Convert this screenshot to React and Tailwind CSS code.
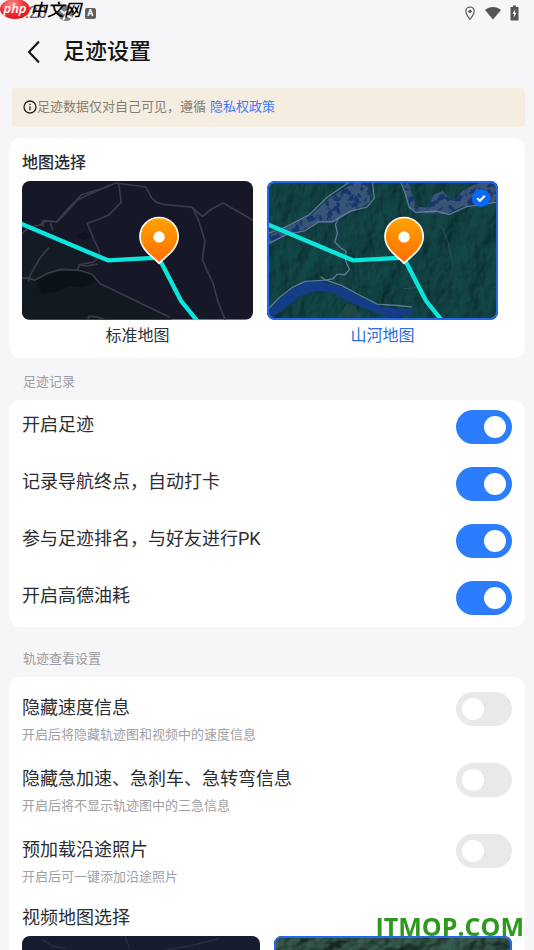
import { useState } from "react";

const recordItems = [
  "开启足迹",
  "记录导航终点，自动打卡",
  "参与足迹排名，与好友进行PK",
  "开启高德油耗",
];

const trackItems = [
  { title: "隐藏速度信息", hint: "开启后将隐藏轨迹图和视频中的速度信息" },
  { title: "隐藏急加速、急刹车、急转弯信息", hint: "开启后将不显示轨迹图中的三急信息" },
  { title: "预加载沿途照片", hint: "开启后可一键添加沿途照片" },
];

function StatusBar() {
  return (
    <div className="relative flex h-[26px] shrink-0 items-center justify-between pr-[15px] pl-4 text-[#5c5c5c]">
      <div className="flex items-center gap-2.5">
        <span className="font-[Roboto] text-base leading-5">4:20</span>
        <svg viewBox="0 0 18 18" className="size-[18px]" aria-hidden="true">
          <circle cx="9" cy="9" r="8" fill="#77797b" />
          <path d="M2 5l5 4 9-5M6 16l3-5 6 3" fill="none" stroke="#f7f7f8" strokeWidth="2" />
        </svg>
        <span className="flex size-[11px] items-center justify-center rounded-[2px] bg-[#606060] font-[Roboto] text-[9px] leading-none font-bold text-white">
          A
        </span>
      </div>
      <div className="flex items-center gap-2">
        <svg viewBox="0 0 12 16" className="h-[15px] w-3" aria-hidden="true">
          <path d="M6 1.200c-2.600 0-4.400 1.900-4.400 4.400C1.600 8.800 6 14.200 6 14.200s4.400-5.400 4.400-8.600C10.400 3.100 8.600 1.200 6 1.200z" fill="none" stroke="#666" strokeWidth="1.400" />
          <circle cx="6" cy="5.700" r="1.800" fill="#555" />
        </svg>
        <svg viewBox="0 0 18 14" className="h-[14px] w-[18px]" aria-hidden="true">
          <path d="M1 4C5.500 0 12.500 0 17 4L9 13.500z" fill="#555" />
        </svg>
        <svg viewBox="0 0 9 16" className="h-4 w-[9px]" aria-hidden="true">
          <path d="M3 0.500h3v1.500h2.500v13.500h-8V2H3z" fill="#555" />
          <path d="M5.300 4L2.500 9h1.700l-.6 4 2.900-5.300H4.800z" fill="#f7f7f8" />
        </svg>
      </div>
      <div className="absolute top-0 left-0 flex items-start text-black">
        <svg viewBox="0 0 30 20" className="h-5 w-[30px]" aria-hidden="true">
          <defs>
            <radialGradient id="oval" cx="0.400" cy="0.250" r="0.800">
              <stop offset="0" stopColor="#ff8d86" />
              <stop offset="0.500" stopColor="#f3353a" />
              <stop offset="1" stopColor="#d9121d" />
            </radialGradient>
          </defs>
          <ellipse cx="15" cy="9" rx="15" ry="10" fill="url(#oval)" />
          <text x="15" y="13" textAnchor="middle" fill="#fff" fontFamily="Open Sans" fontSize="13" fontStyle="italic" fontWeight="600">
            php
          </text>
        </svg>
        <span className="text-[17px] leading-5 font-medium italic">中文网</span>
      </div>
    </div>
  );
}

function Route() {
  return (
    <>
      <path d="M-6 126L258 237L410 229L476 357L530 424" fill="none" stroke="#0be5db" strokeWidth="13" strokeLinejoin="round" />
      <path d="M411 246C396 228 354 206 354 166a57 57 0 0 1 114 0c0 40-42 62-57 80z" fill="url(#pin)" stroke="#fff" strokeWidth="5" strokeLinejoin="round" />
      <circle cx="411" cy="167" r="17" fill="#fff" />
    </>
  );
}

function PinGradient() {
  return (
    <linearGradient id="pin" x1="0" y1="0" x2="0" y2="1">
      <stop offset="0" stopColor="#ffa300" />
      <stop offset="1" stopColor="#ff6d00" />
    </linearGradient>
  );
}

function StandardMap() {
  return (
    <svg viewBox="0 0 693 414" preserveAspectRatio="xMidYMid slice" className="block size-full" aria-hidden="true">
      <defs>
        <PinGradient />
      </defs>
      <rect width="693" height="414" fill="#161827" />
      <path d="M0 130L258 240L230 252L165 262L100 268L40 295L0 290z" fill="#151b24" />
      <path d="M0 290L40 295L100 268L165 262L205 270L235 305L450 414H0z" fill="#111a20" />
      <path d="M44 296L110 272L170 265L206 276L225 300L180 318L140 312L110 330L60 338z" fill="#0b1219" />
      <path d="M170 160l20-10 14 14-12 12-22-4z" fill="#10121f" />
      <g fill="none" stroke="#393b48" strokeWidth="5" strokeLinejoin="round">
        <path d="M60 130L64 118L104 122L138 84L178 42L254 18L280 6L372 18L388 50L404 64L426 70L508 78L540 106L570 82L602 66L693 118" />
        <path d="M0 158l24-20 36-8 12-10 34 2 26-26 36-40 96-44M86 126l8 20M60 128l8 8" />
        <path d="M290 8l8 56-38 38-38 16-26 8 20 48 14 30 4 20-18 18-42 8-8 18" />
        <path d="M170 250l26 4 30-6M0 290h22l18 6 42-22 34-10 52 2 42 12 24 28 210 102" />
        <path d="M20 300l8-22 26-46 28-34M512 80l20 46 16 54-8 54 10 24 22 46 14 54 22 56" />
        <path d="M200 414v-10l24 2 26 8" />
      </g>
      <Route />
    </svg>
  );
}

function TerrainMap() {
  return (
    <svg viewBox="0 0 693 414" preserveAspectRatio="xMidYMid slice" className="block size-full" aria-hidden="true">
      <defs>
        <PinGradient />
        <filter id="relief" x="0" y="0" width="100%" height="100%" colorInterpolationFilters="sRGB">
          <feTurbulence type="fractalNoise" baseFrequency="0.014 0.009" numOctaves="4" seed="8" />
          <feDiffuseLighting surfaceScale="22" lightingColor="#1b5350">
            <feDistantLight azimuth="220" elevation="52" />
          </feDiffuseLighting>
        </filter>
        <filter id="town" x="0" y="0" width="100%" height="100%" colorInterpolationFilters="sRGB">
          <feTurbulence type="fractalNoise" baseFrequency="0.050" numOctaves="4" seed="4" />
          <feColorMatrix values="0 0 0 0 0.090  0 0 0 0 0.210  0 0 0 0 0.430  0 8 0 0 -4" />
          <feComposite in2="SourceGraphic" operator="in" result="dots" />
          <feMerge>
            <feMergeNode in="SourceGraphic" />
            <feMergeNode in="dots" />
          </feMerge>
        </filter>
      </defs>
      <rect width="693" height="414" fill="#104245" />
      <rect width="693" height="414" filter="url(#relief)" opacity="0.400" />
      <g fill="#385576" filter="url(#town)">
        <path d="M0 180L0 166L56 140L126 106L190 50L264 4L306 4L310 62L282 80L252 92L220 112L200 124L150 124L110 146L60 160L0 190z" />
        <path d="M404 0L430 80L460 96L540 98L586 76L640 70L693 60V0H640L590 26L556 60L526 30L500 40L480 80L446 76L422 0z" />
      </g>
      <path d="M0 396L40 350L86 316L120 300L166 300L230 318L290 352L350 378L440 384L430 400L380 408L330 396L280 376L236 356L200 334L150 328L100 344L60 376L20 406L0 414z" fill="#153c87" />
      <path d="M204 414l40-50 24 12 20 38z" fill="#28504a" opacity="0.600" />
      <g fill="none" stroke="#7088ad" strokeWidth="4" strokeLinejoin="round" opacity="0.800">
        <path d="M0 158l56-20 70-36 56-54 70-48M0 190l60-30 56-12 40-26h40l24-14 32-18 48-12 22-26-6-54" />
        <path d="M400 0l14 36 12 42 20 16 58-4 42 10 54-24 40-4 53-10" />
        <path d="M216 110l-10 20 6 26-8 26 18 18 16 10-4 18 6 20 8 16-14 16-22-2-14 14-22 4-14-10M0 388l38-40 42-32 36-16 62-4 46 16 56 30 50 26 60 4 44 4" />
      </g>
      <path d="M510 130l16 10 10 26 8 24 14 70-10 10M410 322l36-4" fill="none" stroke="#4b7479" strokeWidth="2" opacity="0.600" />
      <Route />
    </svg>
  );
}

function NightVideoMap() {
  return (
    <svg viewBox="0 0 693 414" preserveAspectRatio="xMidYMid slice" className="block size-full" aria-hidden="true">
      <rect width="693" height="414" fill="#171c30" />
      <path d="M60 10l30 20 40 6M300 0l14 36M400 44l90-16 80-20M0 120l260 80 200-40 233 90" fill="none" stroke="#2f3448" strokeWidth="3" />
    </svg>
  );
}

function SatelliteVideoMap() {
  return (
    <svg viewBox="0 0 693 414" preserveAspectRatio="xMidYMid slice" className="block size-full" aria-hidden="true">
      <defs>
        <filter id="forest" x="0" y="0" width="100%" height="100%" colorInterpolationFilters="sRGB">
          <feTurbulence type="fractalNoise" baseFrequency="0.014 0.020" numOctaves="3" seed="3" />
          <feDiffuseLighting surfaceScale="24" lightingColor="#42695a">
            <feDistantLight azimuth="220" elevation="52" />
          </feDiffuseLighting>
        </filter>
      </defs>
      <rect width="693" height="414" fill="#2b4c42" />
      <rect width="693" height="414" filter="url(#forest)" opacity="0.600" />
    </svg>
  );
}

const mapStyles = [
  { name: "标准地图", preview: StandardMap, videoPreview: NightVideoMap },
  { name: "山河地图", preview: TerrainMap, videoPreview: SatelliteVideoMap },
];

function MapPicker({ name, video }) {
  const [selected, setSelected] = useState(1);

  return (
    <div className="flex gap-3.5">
      {mapStyles.map((style, index) => {
        const active = selected === index;
        const Preview = video ? style.videoPreview : style.preview;
        return (
          <label key={style.name} className="flex-1 cursor-pointer">
            <input
              type="radio"
              name={name}
              aria-label={style.name}
              className="sr-only"
              checked={active}
              onChange={() => setSelected(index)}
            />
            <span className="relative block aspect-[5/3] overflow-hidden rounded-lg">
              <Preview />
              {active && (
                <span className="absolute inset-0 rounded-lg border-2 border-[#2569e8]" />
              )}
              {active && !video && (
                <span className="absolute top-2 right-2 flex size-[18px] items-center justify-center rounded-full bg-[#0968f6]">
                  <svg viewBox="0 0 18 18" className="size-[18px]" aria-hidden="true">
                    <path d="M5.200 9.200l2.700 2.600 4.900-5" fill="none" stroke="#fff" strokeWidth="2.200" />
                  </svg>
                </span>
              )}
            </span>
            {!video && (
              <span className={`mt-1 block text-center text-base leading-6 ${active ? "text-[#2b6be5]" : "text-[#303136]"}`}>
                {style.name}
              </span>
            )}
          </label>
        );
      })}
    </div>
  );
}

function Switch({ id, defaultChecked }) {
  return (
    <input
      id={id}
      type="checkbox"
      role="switch"
      defaultChecked={defaultChecked}
      className="flex h-[34px] w-14 shrink-0 cursor-pointer appearance-none items-center rounded-full bg-[#e9e9eb] px-1.5 before:size-[22px] before:rounded-full before:bg-white checked:justify-end checked:bg-[#2b7dfd]"
    />
  );
}

function Section({ title, className, children }) {
  return (
    <section className={className}>
      <h2 className="px-3.5 pt-3.5 pb-2 text-[13px] leading-5 text-[#9c9ca1]">{title}</h2>
      {children}
    </section>
  );
}

export default function App() {
  return (
    <div className="flex h-screen flex-col overflow-hidden bg-[#f6f6f8] font-[Roboto,'Noto_Sans_CJK_SC',sans-serif] text-[#2c2d32]">
      <StatusBar />
      <header className="flex h-[51px] shrink-0 items-center gap-[23px] pl-[27px]">
        <button type="button" aria-label="返回" className="h-6 w-[13px]">
          <svg viewBox="0 0 13 24" className="h-6 w-[13px]" aria-hidden="true">
            <path d="M12 1.500L2 12l10 10.500" fill="none" stroke="#111" strokeWidth="2" />
          </svg>
        </button>
        <h1 className="text-[22px] leading-8 font-medium text-[#151515]">足迹设置</h1>
      </header>

      <main className="flex-1 overflow-y-auto px-[9px] pt-[11px] [scrollbar-width:none]">
        <p className="ml-[3px] flex items-center rounded bg-[#f5ede0] pt-2 pb-2.5 pl-[11px] text-[13px] leading-[21px] text-[#857e73]">
          <svg viewBox="0 0 14 14" className="size-3.5 shrink-0" aria-hidden="true">
            <circle cx="7" cy="7" r="6" fill="none" stroke="#26231e" strokeWidth="1.300" />
            <path d="M7 6.200v4M7 3.700v1.400" stroke="#26231e" strokeWidth="1.300" />
          </svg>
          足迹数据仅对自己可见，遵循
          <a href="#privacy" className="ml-1 text-[#3c7bf6]">
            隐私权政策
          </a>
        </p>

        <section className="mt-[11px] rounded-xl bg-white pt-3 pr-[27px] pb-2.5 pl-[13px]">
          <h2 className="mb-1.5 text-base leading-[25px] font-medium">地图选择</h2>
          <MapPicker name="map" />
        </section>

        <Section title="足迹记录">
          <div className="flex flex-col gap-[23px] rounded-xl bg-white px-[13px] pt-2.5 pb-3">
            {recordItems.map((item, index) => (
              <div key={item} className="flex items-start justify-between">
                <label htmlFor={`record-${index}`} className="text-lg leading-[30px]">
                  {item}
                </label>
                <Switch id={`record-${index}`} defaultChecked />
              </div>
            ))}
          </div>
        </Section>

        <Section title="轨迹查看设置" className="mt-2">
          <div className="rounded-xl bg-white px-[13px] pt-[15px] pb-4">
            <div className="flex flex-col gap-[17px]">
              {trackItems.map((item, index) => (
                <div key={item.title} className="flex items-start justify-between">
                  <label htmlFor={`track-${index}`}>
                    <span className="block text-lg leading-8">{item.title}</span>
                    <span className="block text-[13px] leading-[22px] text-[#a0a0a5]">{item.hint}</span>
                  </label>
                  <Switch id={`track-${index}`} />
                </div>
              ))}
            </div>
            <h3 className="mt-3.5 mb-0.5 text-lg leading-8">视频地图选择</h3>
            <MapPicker name="video-map" video />
          </div>
        </Section>
      </main>

      <div className="pointer-events-none fixed right-2.5 bottom-2 font-['Open_Sans',sans-serif] text-[25px] leading-8 font-bold text-[#2f991f]">
        ITMOP.COM
      </div>
    </div>
  );
}
